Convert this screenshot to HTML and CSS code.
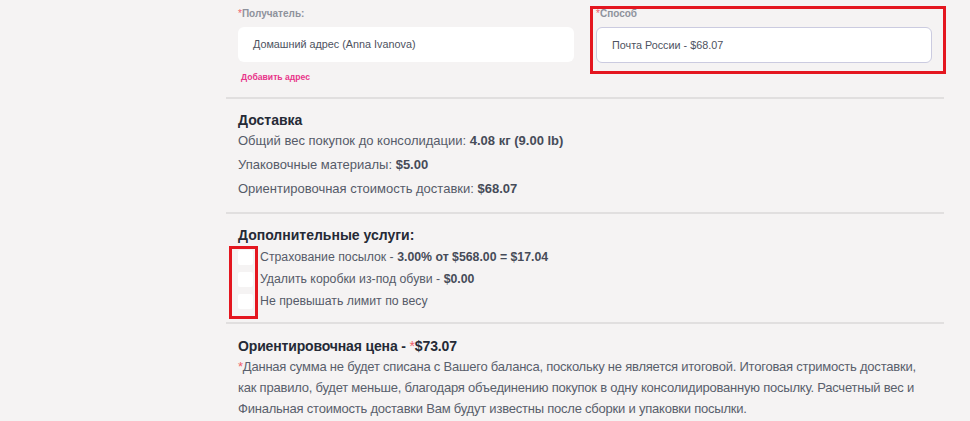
FILE: index.html
```html
<!DOCTYPE html>
<html lang="ru">
<head>
<meta charset="utf-8">
<link rel="stylesheet" href="styles.css">
</head>
<body>
<div class="page">
  <section class="fields">
    <div class="field">
      <div class="label"><span class="req">*</span>Получатель:</div>
      <div class="input">Домашний адрес (Anna Ivanova)</div>
      <a class="add-link">Добавить адрес</a>
    </div>
    <div class="field">
      <div class="label"><span class="req">*</span>Способ</div>
      <div class="input input-bordered">Почта России - $68.07</div>
      <div class="mark mark-method"></div>
    </div>
  </section>

  <section class="block block-delivery">
    <h2 class="title">Доставка</h2>
    <p class="row">Общий вес покупок до консолидации: <b>4.08 кг (9.00 lb)</b></p>
    <p class="row">Упаковочные материалы: <b>$5.00</b></p>
    <p class="row">Ориентировочная стоимость доставки: <b>$68.07</b></p>
  </section>

  <section class="block block-extra">
    <h2 class="title">Дополнительные услуги:</h2>
    <div class="checks">
      <div class="mark mark-checks"></div>
      <label class="check"><span class="box"></span>Страхование посылок - <b>3.00% от $568.00 = $17.04</b></label>
      <label class="check"><span class="box"></span>Удалить коробки из-под обуви - <b>$0.00</b></label>
      <label class="check"><span class="box"></span>Не превышать лимит по весу</label>
    </div>
  </section>

  <section class="block block-price">
    <h2 class="title title-narrow">Ориентировочная цена - <span class="req">*</span>$73.07</h2>
    <p class="note"><span class="req">*</span>Данная сумма не будет списана с Вашего баланса, поскольку не является итоговой. Итоговая стримость доставки, как правило, будет меньше, благодаря объединению покупок в одну консолидированную посылку. Расчетный вес и Финальная стоимость доставки Вам будут известны после сборки и упаковки посылки.</p>
  </section>
</div>
</body>
</html>
```
FILE: styles.css
```css
* { box-sizing: border-box; }
html, body { margin: 0; padding: 0; }
body {
  background: #f5f3f3;
  font-family: "Liberation Sans", Arial, sans-serif;
  color: #555b69;
  width: 970px;
  height: 421px;
  overflow: hidden;
}
.page {
  margin-left: 226px;
  width: 718px;
}
.fields {
  display: grid;
  grid-template-columns: 336px 336px;
  column-gap: 22px;
  padding: 7px 12px 0;
  height: 99px;
  border-bottom: 2px solid #e1dfdf;
}
.field { position: relative; }
.label {
  font-size: 10px;
  font-weight: bold;
  color: #8e929c;
  height: 13px;
  line-height: 13px;
  margin-bottom: 7px;
}
.req { color: #f0606a; font-weight: normal; }
.input {
  height: 35px;
  background: #fff;
  border-radius: 6px;
  padding: 0 15px;
  line-height: 35px;
  font-size: 10.8px;
  color: #4d5260;
}
.input-bordered {
  border: 1px solid #cbcbe0;
  line-height: 34px;
  height: 36px;
}
.add-link {
  display: block;
  margin-top: 10px;
  margin-left: 3px;
  font-size: 8.6px;
  line-height: 11px;
  font-weight: bold;
  color: #e8358a;
}
.mark {
  position: absolute;
  border: 3px solid #e4161f;
}
.mark-method { left: -6px; right: -14px; top: -1px; height: 68px; }

.block {
  padding: 0 12px;
  border-bottom: 2px solid #e1dfdf;
}
.title {
  margin: 0;
  font-size: 14px;
  line-height: 18px;
  font-weight: bold;
  color: #252a36;
}
.block-delivery { height: 115px; padding-top: 12px; }
.row {
  margin: 0;
  font-size: 13px;
  line-height: 24px;
}
.row b, .check b { color: #464b58; }
.block-extra { height: 110px; padding-top: 12px; }
.checks { position: relative; margin-top: 2px; }
.check {
  display: flex;
  align-items: center;
  height: 22px;
  font-size: 12.3px;
  white-space: pre;
}
.box {
  width: 15px;
  height: 15px;
  background: #fff;
  border-radius: 2px;
  margin-right: 7px;
}
.mark-checks { left: -9px; top: 0; width: 29px; height: 73px; }
.block-price { border-bottom: none; padding-top: 13px; }
.title-narrow { letter-spacing: -0.15px; }
.note {
  margin: 1px 0 0;
  font-size: 13px;
  letter-spacing: -0.22px;
  line-height: 21px;
  color: #59606c;
}
```
